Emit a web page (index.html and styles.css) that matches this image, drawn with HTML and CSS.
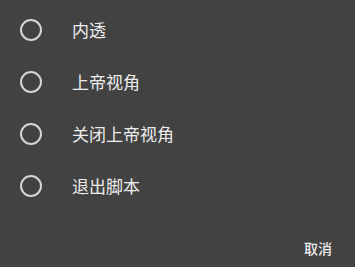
FILE: index.html
```html
<!DOCTYPE html>
<html lang="zh">
<head>
<meta charset="utf-8">
<link rel="stylesheet" href="styles.css">
</head>
<body>
<div class="dialog">
  <ul class="options">
    <li class="option"><span class="radio"></span><span class="label">内透</span></li>
    <li class="option"><span class="radio"></span><span class="label">上帝视角</span></li>
    <li class="option"><span class="radio"></span><span class="label">关闭上帝视角</span></li>
    <li class="option"><span class="radio"></span><span class="label">退出脚本</span></li>
  </ul>
  <div class="actions">
    <span class="btn">取消</span>
  </div>
</div>
</body>
</html>
```
FILE: styles.css
```css
html, body {
  margin: 0;
  padding: 0;
  background: #424242;
}
.dialog {
  width: 355px;
  height: 267px;
  background: #424242;
  font-family: "Noto Sans CJK SC", "Noto Sans", sans-serif;
  color: #ececec;
  display: flex;
  flex-direction: column;
}
.options {
  list-style: none;
  margin: 0;
  padding: 4px 0 0 0;
}
.option {
  height: 52px;
  display: flex;
  align-items: center;
  padding-left: 20px;
}
.radio {
  box-sizing: border-box;
  width: 22px;
  height: 22px;
  border: 2px solid #d4d4d4;
  border-radius: 50%;
  flex: none;
}
.label {
  margin-left: 30px;
  font-size: 17px;
  line-height: 22px;
  font-weight: 400;
}
.actions {
  display: flex;
  justify-content: flex-end;
  padding: 26px 23px 0 0;
}
.btn {
  font-size: 14px;
  line-height: 20px;
  color: #ececec;
  font-weight: 500;
}
```
